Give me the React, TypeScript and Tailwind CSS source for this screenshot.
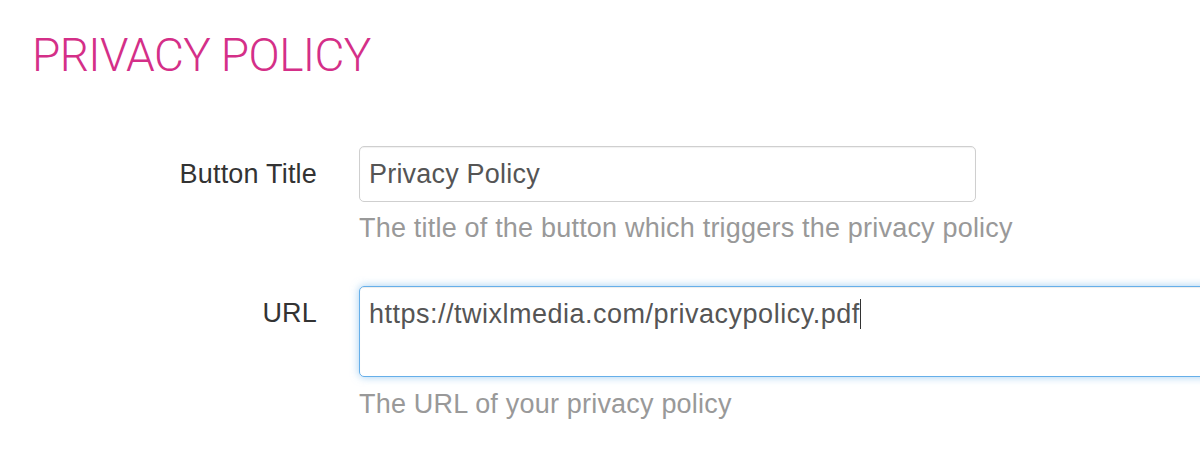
export default function App() {
  return (
    <div
      className="w-[1200px] h-[451px] overflow-hidden bg-white"
      style={{ fontFamily: "'Liberation Sans', Arial, sans-serif" }}
    >
      {/* Heading */}
      <h1
        className="pl-[32px] pt-[27px] text-[46px] leading-[56px] font-light tracking-[-0.6px] text-[#d42f88]"
        style={{ fontFamily: "Roboto, 'Liberation Sans', sans-serif" }}
      >
        PRIVACY POLICY
      </h1>

      <div className="mt-[63px] flex flex-col">
        {/* Button Title row */}
        <div className="flex items-start">
          <label className="w-[317px] shrink-0 text-right text-[27px] tracking-[0.2px] leading-[56px] text-[#333]">
            Button Title
          </label>
          <div className="ml-[42px] flex flex-col">
            <div className="w-[617px] h-[56px] flex items-center px-[9px] rounded-[5px] border border-[#cfcfcf] text-[27px] tracking-[0.2px] text-[#555] shadow-[inset_0_1px_1px_rgba(0,0,0,0.06)]">
              Privacy Policy
            </div>
            <p className="mt-[11px] text-[27px] tracking-[0.2px] leading-[30px] text-[#999]">
              The title of the button which triggers the privacy policy
            </p>
          </div>
        </div>

        {/* URL row */}
        <div className="mt-[43px] flex items-start">
          <label className="w-[317px] shrink-0 text-right text-[27px] tracking-[0.2px] leading-[30px] pt-[12px] text-[#333]">
            URL
          </label>
          <div className="ml-[42px] flex flex-col">
            <div className="w-[900px] h-[91px] px-[9px] pt-[12px] rounded-[5px] border border-[#66afe9] text-[27px] tracking-[0.5px] leading-[30px] text-[#555] shadow-[inset_0_1px_1px_rgba(0,0,0,0.075),0_0_8px_rgba(102,175,233,0.6)]">
              https://twixlmedia.com/privacypolicy.pdf
              <span className="inline-block w-[1px] h-[30px] align-[-6px] bg-[#333]" />
            </div>
            <p className="mt-[12px] text-[27px] tracking-[0.2px] leading-[30px] text-[#999]">
              The URL of your privacy policy
            </p>
          </div>
        </div>
      </div>
    </div>
  );
}
